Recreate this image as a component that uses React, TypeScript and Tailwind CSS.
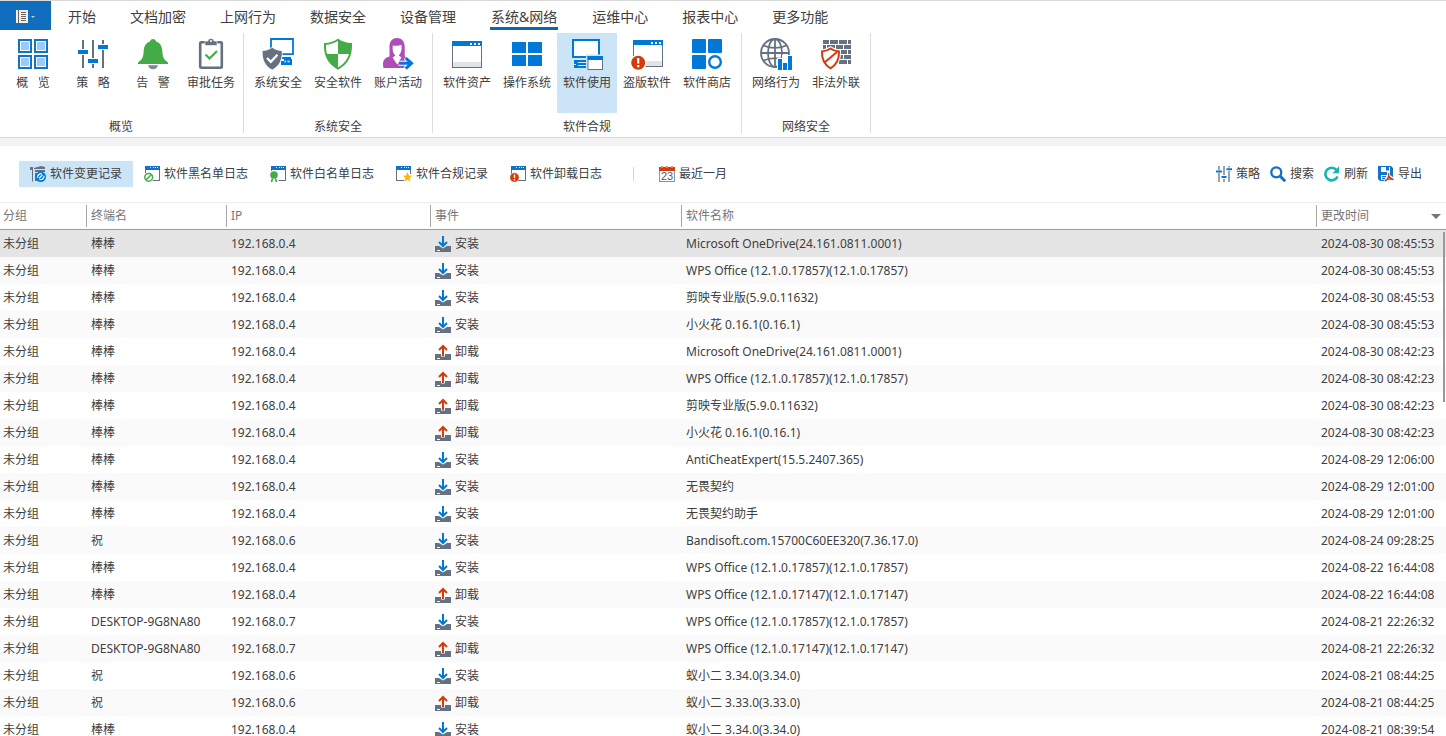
import type { ReactNode } from 'react'

const BLUE = '#0078d7'
const SLATE = '#657080'
const GREEN = '#45ab48'
const RED = '#d43b0c'

function Icon32({ children }: { children: ReactNode }) {
  return (
    <svg className="w-8 h-8 shrink-0" viewBox="0 0 32 32" fill="none" aria-hidden="true">
      {children}
    </svg>
  )
}

function Icon16({ children }: { children: ReactNode }) {
  return (
    <svg className="w-4 h-4 shrink-0" viewBox="0 0 16 16" fill="none" aria-hidden="true">
      {children}
    </svg>
  )
}

function OverviewIcon() {
  return (
    <Icon32>
      {[[1, 1], [17, 1], [1, 17], [17, 17]].map(([x, y]) => (
        <g key={`${x}-${y}`}>
          <rect x={x + 1} y={y + 1} width="12" height="12" fill="#fff" stroke="#1173c4" strokeWidth="2" />
          <rect x={x + 3} y={y + 3} width="8" height="8" fill="#99c9ff" />
        </g>
      ))}
    </Icon32>
  )
}

function SlidersIcon() {
  return (
    <Icon32>
      <path d="M6 2v9M6 17v13M16 2v18M16 26v4M26 2v4M26 12v18" stroke={SLATE} strokeWidth="2" />
      <path d="M1 14h10M11 23h10M21 9h10" stroke={BLUE} strokeWidth="4" />
    </Icon32>
  )
}

function BellIcon() {
  return (
    <Icon32>
      <path d="M16 1c1.600 0 2.800 1 3 2.600 4 1.200 6 4.600 6.300 9.400.3 5.500 1.200 8.500 5.700 11.500V26H1v-1.500c4.500-3 5.400-6 5.700-11.500C7 8.200 9 4.800 13 3.600 13.200 2 14.400 1 16 1Z" fill={GREEN} />
      <path d="M11 27.200h10c-.6 2.400-2.500 4-5 4s-4.400-1.600-5-4Z" fill="#7d8896" />
    </Icon32>
  )
}

function ClipboardIcon() {
  return (
    <Icon32>
      <rect x="5.200" y="4.200" width="21.600" height="25.600" rx="1" fill="#fff" stroke={SLATE} strokeWidth="2.600" />
      <path d="M10 3h3a3 2.600 0 0 1 6 0h3v4.500H10Z" fill={SLATE} stroke="#fff" strokeWidth=".6" />
      <circle cx="16" cy="3" r="1" fill="#fff" />
      <path d="m10.500 16.500 4 4 7.500-7.500" stroke={GREEN} strokeWidth="2.200" />
    </Icon32>
  )
}

function SystemSafeIcon() {
  return (
    <Icon32>
      <path d="M9 13V1h22v15.200H19" stroke={BLUE} strokeWidth="1.800" />
      <path d="M20 19h9v2h1v6H19v-4h3v-2h-2Z" fill={BLUE} />
      <path d="M22.500 23.500h1.500M25.500 23.500h2" stroke="#fff" strokeWidth="1.600" />
      <path d="M10.200 9.300c3 2.200 6.300 3.200 10 3.400.5 9-2.700 15.600-10 19.300C3 28.300-.3 21.700.2 12.700c3.700-.2 7-1.200 10-3.400Z" fill={SLATE} stroke="#fff" strokeWidth=".8" />
      <path d="m5 20 3.800 3.800 6.700-7" stroke="#fff" strokeWidth="2.300" />
    </Icon32>
  )
}

function SafeSoftwareIcon() {
  return (
    <Icon32>
      <path d="M16 1.700c4 2.800 8.300 4 13 4.200.5 11.100-3.600 19.600-13 24.600C6.600 25.500 2.500 17 3 5.900c4.700-.2 9-1.400 13-4.200Z" fill="#fff" stroke={GREEN} strokeWidth="2" />
      <path d="M16 1.700c4 2.800 8.300 4 13 4.200.1 3.700-.2 7-1.100 10.100H16Z" fill={GREEN} />
      <path d="M16 16v14.500C9.700 27.200 5.800 22.200 4.100 16Z" fill={GREEN} />
    </Icon32>
  )
}

function AccountIcon() {
  return (
    <Icon32>
      <path d="M7.500 18.500V8.500C7.500 3.300 10.500 0 15 0s7.700 3.300 7.700 8.500v10c4.300 1 7 3 7.300 6V30H1.500C.2 24 1.500 20 7.500 18.500Z" fill="#ac4db8" />
      <path d="M10.800 7.500c3 .6 6.500.2 8.700-.7.6 4.700-.3 8.700-2.700 10.700l2.700 2-4.400 7-4.500-7 2.800-2c-2.400-2-3.300-5.500-2.600-10Z" fill="#fff" />
      <path d="M23 24.500h9V32h-9Z" fill="#fff" />
      <path d="M16.500 25.300h12M23.500 19.500l6 5.800-6 5.800" stroke="#fff" strokeWidth="5" />
      <path d="M17 25.300h12M23.700 20l5.800 5.300-5.800 5.300" stroke={BLUE} strokeWidth="3" />
    </Icon32>
  )
}

function AssetIcon() {
  return (
    <Icon32>
      <rect x="1.500" y="3.500" width="29" height="26" fill="#fff" stroke={SLATE} />
      <path d="M2 24h28v5H2Z" fill="#e1e3e6" />
      <path d="M1 3h30v5H1Z" fill={BLUE} />
      <path d="M19 5h2v2h-2ZM23 5h2v2h-2ZM27 5h2v2h-2Z" fill="#fff" />
    </Icon32>
  )
}

function WindowsIcon() {
  return (
    <Icon32>
      <path d="M1 4h14v11H1ZM17 4h14v11H17ZM1 17h14v11H1ZM17 17h14v11H17Z" fill={BLUE} />
    </Icon32>
  )
}

function UsageIcon() {
  return (
    <Icon32>
      <rect x="2" y="2" width="26" height="17" fill="#fff" stroke={BLUE} strokeWidth="2" />
      <path d="M3 22h13v2H7v1h9v5H3v-3h2v-1H3Z" fill={BLUE} />
      <path d="M7 27.500h9" stroke="#fff" />
      <path d="M15 16.500h17V32H15Z" fill="#cbe4f6" />
      <rect x="17" y="18.500" width="14.500" height="13" fill="#fff" stroke={SLATE} />
      <path d="M16.500 18H32v4H16.500Z" fill={BLUE} />
    </Icon32>
  )
}

function PiracyIcon() {
  return (
    <Icon32>
      <rect x="2.500" y="2.500" width="29" height="26" fill="#fff" stroke={SLATE} />
      <path d="M3 23h28v5H3Z" fill="#e1e3e6" />
      <path d="M2 2h30v5H2Z" fill={BLUE} />
      <path d="M20 4h2v2h-2ZM24 4h2v2h-2ZM28 4h2v2h-2Z" fill="#fff" />
      <circle cx="7.200" cy="24.700" r="7.600" fill={RED} stroke="#fff" strokeWidth="1.200" />
      <path d="M7.200 20v5.500M7.200 27v2.300" stroke="#fff" strokeWidth="2.200" />
    </Icon32>
  )
}

function StoreIcon() {
  return (
    <Icon32>
      <rect x="1" y="1" width="14" height="14" rx="1" fill={BLUE} />
      <rect x="17" y="1" width="14" height="14" rx="1" fill={BLUE} />
      <rect x="1" y="17" width="14" height="14" rx="1" fill={BLUE} />
      <circle cx="24" cy="24" r="5.800" stroke={BLUE} strokeWidth="2.400" />
    </Icon32>
  )
}

function GlobeIcon() {
  return (
    <Icon32>
      <g stroke={SLATE} strokeWidth="1.800">
        <circle cx="15" cy="15" r="14" />
        <ellipse cx="15" cy="15" rx="7" ry="14" />
        <path d="M15 1v28M1 15h28M3.500 7.500c7 3 16 3 23 0M3.500 22.500c7-3 16-3 23 0" />
      </g>
      <path d="M17 20h5v-3h10v15H17Z" fill="#fff" />
      <path d="M18 21h4v11h-4ZM23 25h4v7h-4ZM28 18h4v14h-4Z" fill={BLUE} />
    </Icon32>
  )
}

function FirewallIcon() {
  return (
    <Icon32>
      <path
        d="M3 2h6v4H3ZM10 2h8v4h-8ZM19 2h8v4h-8ZM28 2h3v4h-3ZM3 7h3v4H3ZM7 7h8v4H7ZM16 7h7v4h-7ZM24 7h7v4h-7ZM3 12h7v4H3ZM11 12h7v4h-7ZM19 12h8v4h-8ZM28 12h3v4h-3ZM16 17h7v4h-7ZM24 17h7v4h-7ZM19 22h8v4h-8ZM28 22h3v4h-3Z"
        fill={SLATE}
      />
      <path d="M10.500 10.500c2.700 1.900 5.400 2.800 8.500 3 .3 7.500-2.300 13.200-8.500 16.800C4.300 26.700 1.700 21 2 13.500c3.100-.2 5.800-1.100 8.500-3Z" fill="#fff" stroke="#fff" strokeWidth="4" />
      <path d="M10.500 10.500c2.700 1.900 5.400 2.800 8.500 3 .3 7.500-2.300 13.200-8.500 16.800C4.300 26.700 1.700 21 2 13.500c3.100-.2 5.800-1.100 8.500-3ZM4.500 24.500 17 14" stroke={RED} strokeWidth="2" />
    </Icon32>
  )
}

function MiniWindow({ children }: { children: ReactNode }) {
  return (
    <Icon16>
      <rect x="1.500" y="1.500" width="14" height="13" fill="#fff" stroke={SLATE} />
      <path d="M1 0h15v4H1Z" fill="#1173c4" />
      <path d="M6 1h1v1H6ZM9 1h1v1H9ZM11 1h1v1h-1ZM13 1h1v1h-1Z" fill="#fff" />
      {children}
    </Icon16>
  )
}

function ChangeIcon() {
  return (
    <Icon16>
      <path d="M0 1h3v14.500H2V4H0Z" fill={SLATE} />
      <path d="m4 2 7-2 4 1v2H4ZM5 4h10v2H5ZM5 7h3v8H5Z" fill={SLATE} />
      <circle cx="10.700" cy="10.700" r="5.300" fill={BLUE} />
      <path d="M7.500 11.700c0-2.500 1.500-4 4.500-4M14 9.700c0 2.500-1.500 4-4.500 4" stroke="#fff" strokeWidth="1.200" />
      <path d="m9 12.300 3.500-3.500" stroke="#fff" strokeWidth="1.200" />
    </Icon16>
  )
}

function BlacklistIcon() {
  return (
    <MiniWindow>
      <circle cx="4.700" cy="11.300" r="5.200" fill="#fff" />
      <circle cx="4.700" cy="11.300" r="3.900" fill="#fff" stroke={GREEN} strokeWidth="1.500" />
      <path d="m2.200 13.800 5-5" stroke={GREEN} strokeWidth="1.500" />
    </MiniWindow>
  )
}

function WhitelistIcon() {
  return (
    <MiniWindow>
      <path d="M0 5h8.500v11H0Z" fill="#fff" />
      <circle cx="4" cy="9" r="3.800" fill={GREEN} />
      <path d="m2.500 12.500-1 3.500M5.500 12.500l1 3.500" stroke={GREEN} strokeWidth="1.700" />
    </MiniWindow>
  )
}

function ComplianceIcon() {
  return (
    <Icon16>
      <rect x=".5" y="1.500" width="14" height="13" fill="#fff" stroke={SLATE} />
      <path d="M0 0h15v4H0Z" fill="#1173c4" />
      <path d="M5 1h1v1H5ZM8 1h1v1H8ZM10 1h1v1h-1ZM12 1h1v1h-1Z" fill="#fff" />
      <path d="M9 8h7v8H8Z" fill="#fff" />
      <path d="m11.500 6 1.500 3.500 3 .3-2.300 2.200.8 3.700-3-1.900-3 1.900.8-3.700L7 9.800l3-.3Z" fill="#ffb900" />
    </Icon16>
  )
}

function UninstallLogIcon() {
  return (
    <MiniWindow>
      <circle cx="4.500" cy="11.500" r="4.700" fill={RED} stroke="#fff" strokeWidth=".5" />
      <path d="M4.500 8.500v3.500M4.500 13v1.500" stroke="#fff" strokeWidth="1.400" />
    </MiniWindow>
  )
}

function CalendarIcon() {
  return (
    <Icon16>
      <rect x=".5" y="1.500" width="15" height="14" fill="#fff" stroke="#8f959d" />
      <path d="M0 1h2V0h2v1h3V0h2v1h3V0h2v1h2v4H0Z" fill={RED} />
      <path d="M3 0v2M8 0v2M13 0v2" stroke="#fff" strokeWidth=".8" />
      <text x="8" y="14" textAnchor="middle" fontSize="11" fontFamily="Liberation Sans, sans-serif" fill="#4d5a78">23</text>
    </Icon16>
  )
}

function PolicyIcon() {
  return (
    <Icon16>
      <path d="M3 0v4M3 7v9M8 0v9M8 13v3M13 0v1.500M13 5v11" stroke={SLATE} strokeWidth="1.300" />
      <path d="M0 5.500h6M5.500 11h5M10.500 3.300H16" stroke={BLUE} strokeWidth="2" />
    </Icon16>
  )
}

function SearchIcon() {
  return (
    <Icon16>
      <circle cx="6.300" cy="6.300" r="5" stroke="#146fc6" strokeWidth="2.300" />
      <path d="m10 10 5.200 5.200" stroke="#146fc6" strokeWidth="3" />
    </Icon16>
  )
}

function RefreshIcon() {
  return (
    <Icon16>
      <path d="M12.500 4A6.300 6.300 0 1 0 13.500 10.500" stroke="#15b5ad" strokeWidth="2.600" />
      <path d="M15 .3v6.900H8.500Z" fill="#15b5ad" />
    </Icon16>
  )
}

function ExportIcon() {
  return (
    <Icon16>
      <path d="M0 0h13l2 2v13H2l-2-2Z" fill="#1474cc" />
      <path d="M3 1h9v5H3ZM3 9h9v5H3Z" fill="#fff" />
      <path d="M8 1h3v3.500H8ZM4 10h4v1.300H4ZM4 12h4v1.300H4Z" fill="#1474cc" />
      <path d="M9 6h3v3l4 3v4H6.500v-3L9 11Z" fill="#fff" />
      <path d="M10.500 7c.8 3-.8 6-3.300 8.300M10.300 9c1 2.500 2.800 4 5.300 4.700M7 14.500c2.500-1.700 5-2 8.500-1" stroke={RED} strokeWidth="1.300" />
    </Icon16>
  )
}

function InstallIcon() {
  return (
    <Icon16>
      <path d="M0 10h4l4 2.500 4-2.500h4v6H0Z" fill={SLATE} />
      <path d="M2 14.500h3" stroke="#fff" />
      <path d="M8 0v10M4 6l4 4 4-4" stroke={BLUE} strokeWidth="2" />
    </Icon16>
  )
}

function UninstallIcon() {
  return (
    <Icon16>
      <path d="M0 10h6v2.500h4V10h6v6H0Z" fill={SLATE} />
      <path d="M2 14.500h3" stroke="#fff" />
      <path d="M8 12V2M4 6l4-4 4 4" stroke={RED} strokeWidth="2" />
    </Icon16>
  )
}

const menuTabs = ['开始', '文档加密', '上网行为', '数据安全', '设备管理', '系统&网络', '运维中心', '报表中心', '更多功能']

const ribbonGroups = [
  {
    title: '概览',
    items: [
      { label: '概\u00a0\u00a0\u00a0览', icon: <OverviewIcon /> },
      { label: '策\u00a0\u00a0\u00a0略', icon: <SlidersIcon /> },
      { label: '告\u00a0\u00a0\u00a0警', icon: <BellIcon /> },
      { label: '审批任务', icon: <ClipboardIcon />, narrow: true },
    ],
  },
  {
    title: '系统安全',
    items: [
      { label: '系统安全', icon: <SystemSafeIcon /> },
      { label: '安全软件', icon: <SafeSoftwareIcon /> },
      { label: '账户活动', icon: <AccountIcon /> },
    ],
  },
  {
    title: '软件合规',
    items: [
      { label: '软件资产', icon: <AssetIcon /> },
      { label: '操作系统', icon: <WindowsIcon /> },
      { label: '软件使用', icon: <UsageIcon />, active: true },
      { label: '盗版软件', icon: <PiracyIcon /> },
      { label: '软件商店', icon: <StoreIcon /> },
    ],
  },
  {
    title: '网络安全',
    items: [
      { label: '网络行为', icon: <GlobeIcon /> },
      { label: '非法外联', icon: <FirewallIcon /> },
    ],
  },
]

const views = [
  { label: '软件变更记录', icon: <ChangeIcon />, active: true },
  { label: '软件黑名单日志', icon: <BlacklistIcon /> },
  { label: '软件白名单日志', icon: <WhitelistIcon /> },
  { label: '软件合规记录', icon: <ComplianceIcon /> },
  { label: '软件卸载日志', icon: <UninstallLogIcon /> },
]

const actions = [
  { label: '策略', icon: <PolicyIcon /> },
  { label: '搜索', icon: <SearchIcon /> },
  { label: '刷新', icon: <RefreshIcon /> },
  { label: '导出', icon: <ExportIcon /> },
]

const columns = [
  { label: '分组', width: 'w-[86px]' },
  { label: '终端名', width: 'w-[140px]' },
  { label: 'IP', width: 'w-[204px]' },
  { label: '事件', width: 'w-[251px]' },
  { label: '软件名称', width: '' },
  { label: '更改时间', width: 'w-[130px]' },
]

// [terminal, ip, event, software, time]
const records = [
  ['棒棒', '192.168.0.4', '安装', 'Microsoft OneDrive(24.161.0811.0001)', '2024-08-30 08:45:53'],
  ['棒棒', '192.168.0.4', '安装', 'WPS Office (12.1.0.17857)(12.1.0.17857)', '2024-08-30 08:45:53'],
  ['棒棒', '192.168.0.4', '安装', '剪映专业版(5.9.0.11632)', '2024-08-30 08:45:53'],
  ['棒棒', '192.168.0.4', '安装', '小火花 0.16.1(0.16.1)', '2024-08-30 08:45:53'],
  ['棒棒', '192.168.0.4', '卸载', 'Microsoft OneDrive(24.161.0811.0001)', '2024-08-30 08:42:23'],
  ['棒棒', '192.168.0.4', '卸载', 'WPS Office (12.1.0.17857)(12.1.0.17857)', '2024-08-30 08:42:23'],
  ['棒棒', '192.168.0.4', '卸载', '剪映专业版(5.9.0.11632)', '2024-08-30 08:42:23'],
  ['棒棒', '192.168.0.4', '卸载', '小火花 0.16.1(0.16.1)', '2024-08-30 08:42:23'],
  ['棒棒', '192.168.0.4', '安装', 'AntiCheatExpert(15.5.2407.365)', '2024-08-29 12:06:00'],
  ['棒棒', '192.168.0.4', '安装', '无畏契约', '2024-08-29 12:01:00'],
  ['棒棒', '192.168.0.4', '安装', '无畏契约助手', '2024-08-29 12:01:00'],
  ['祝', '192.168.0.6', '安装', 'Bandisoft.com.15700C60EE320(7.36.17.0)', '2024-08-24 09:28:25'],
  ['棒棒', '192.168.0.4', '安装', 'WPS Office (12.1.0.17857)(12.1.0.17857)', '2024-08-22 16:44:08'],
  ['棒棒', '192.168.0.4', '卸载', 'WPS Office (12.1.0.17147)(12.1.0.17147)', '2024-08-22 16:44:08'],
  ['DESKTOP-9G8NA80', '192.168.0.7', '安装', 'WPS Office (12.1.0.17857)(12.1.0.17857)', '2024-08-21 22:26:32'],
  ['DESKTOP-9G8NA80', '192.168.0.7', '卸载', 'WPS Office (12.1.0.17147)(12.1.0.17147)', '2024-08-21 22:26:32'],
  ['祝', '192.168.0.6', '安装', '蚁小二 3.34.0(3.34.0)', '2024-08-21 08:44:25'],
  ['祝', '192.168.0.6', '卸载', '蚁小二 3.33.0(3.33.0)', '2024-08-21 08:44:25'],
  ['棒棒', '192.168.0.4', '安装', '蚁小二 3.34.0(3.34.0)', '2024-08-21 08:39:54'],
]

function MenuBar() {
  return (
    <nav className="flex h-[30px] border-t border-[#d9d9d9]">
      <button className="w-[51px] bg-[#106ebe] flex items-center justify-center" aria-label="文件">
        <svg className="w-5 h-4" viewBox="0 0 20 16" fill="none" aria-hidden="true">
          <path d="M0 2h12v13H0Z" fill="#f3efe9" />
          <path d="M2.500 2v13" stroke="#6b6560" />
          <path d="M5 4.500h5M5 6.500h5M5 8.500h5M5 10.500h5M5 12.500h5" stroke="#6b6560" />
          <path d="M15 8h4l-2 2Z" fill="#b9d6ee" />
        </svg>
      </button>
      {menuTabs.map((tab) => (
        <button key={tab} className="px-[17px] text-sm leading-5 flex">
          <span
            className={`h-[29px] pt-1.5 border-b-3 ${
              tab === '系统&网络' ? 'px-px border-[#1067b0]' : 'border-transparent'
            }`}
          >
            {tab}
          </span>
        </button>
      ))}
    </nav>
  )
}

function Ribbon() {
  return (
    <div className="flex h-[108px] pt-[3px] pb-1 border-b border-[#d9d9d9]">
      {ribbonGroups.map((group) => (
        <section key={group.title} className="flex flex-col justify-between border-r border-[#dcdcdc] px-1 first:pl-[3px]">
          <div className="flex">
            {group.items.map((item) => (
              <button
                key={item.label}
                className={`h-20 pt-[5px] flex flex-col items-center gap-[5px] ${'narrow' in item ? 'w-14' : 'w-15'} ${
                  'active' in item ? 'bg-[#cbe4f6]' : ''
                }`}
              >
                {item.icon}
                <span className="leading-4 whitespace-nowrap">{item.label}</span>
              </button>
            ))}
          </div>
          <h2 className="text-center leading-3">{group.title}</h2>
        </section>
      ))}
    </div>
  )
}

function Toolbar() {
  return (
    <div className="flex items-center h-14 pl-[19px] pr-6 shrink-0">
      {views.map((view) => (
        <button
          key={view.label}
          className={`flex items-center gap-1 h-[26px] px-[11px] ${view.active ? 'bg-[#cbe4f6]' : ''}`}
        >
          {view.icon}
          {view.label}
        </button>
      ))}
      <span className="w-px h-3.5 ml-5 mr-[25px] bg-[#d6d6d6]" />
      <button className="flex items-center gap-1">
        <CalendarIcon />
        最近一月
      </button>
      <div className="flex gap-2.5 ml-auto">
        {actions.map((action) => (
          <button key={action.label} className="flex items-center gap-1">
            {action.icon}
            {action.label}
          </button>
        ))}
      </div>
    </div>
  )
}

function RecordTable() {
  return (
    <div className="relative flex-1 min-h-0 overflow-hidden border-t border-[#ececec]">
      <table className="w-full table-fixed border-separate border-spacing-0 whitespace-nowrap">
        <thead>
          <tr className="text-[#767676]">
            {columns.map((col, i) => (
              <th
                key={col.label}
                scope="col"
                className={`h-[27px] p-0 text-left font-normal border-b border-[#9b9b9b] ${col.width}`}
              >
                <div
                  className={`flex items-center justify-between h-[22px] ${
                    i === 0 ? 'pl-[3px]' : 'pl-1 border-l border-[#a6a6a6]'
                  }`}
                >
                  {col.label}
                  {i === columns.length - 1 && (
                    <svg className="w-2.5 h-[5px] mr-[5px]" viewBox="0 0 10 5" aria-hidden="true">
                      <path d="M0 0h10L5 5Z" fill="#767676" />
                    </svg>
                  )}
                </div>
              </th>
            ))}
          </tr>
        </thead>
        <tbody>
          {records.map(([terminal, ip, event, software, time], i) => (
            <tr key={i} className={`h-[27px] ${i === 0 ? 'bg-[#e5e5e5]' : 'odd:bg-white even:bg-[#fafafa]'}`}>
              <td className="p-0 pl-[3px]">未分组</td>
              <td className="p-0 pl-[5px]">{terminal}</td>
              <td className="p-0 pl-[5px]">{ip}</td>
              <td className="p-0 pl-[5px]">
                <span className="flex items-center gap-1">
                  {event === '安装' ? <InstallIcon /> : <UninstallIcon />}
                  {event}
                </span>
              </td>
              <td className="p-0 pl-[5px]">{software}</td>
              <td className="p-0 pl-[5px]">{time}</td>
            </tr>
          ))}
        </tbody>
      </table>
      <div className="absolute right-px top-[29px] w-0.5 h-[170px] bg-[#999999]" />
    </div>
  )
}

export default function App() {
  return (
    <div className="h-screen flex flex-col overflow-hidden bg-white text-[#404040] text-xs font-['Noto_Sans','Noto_Sans_CJK_SC',sans-serif]">
      <header className="border-b-8 border-[#f2f2f2] shrink-0">
        <MenuBar />
        <Ribbon />
      </header>
      <main className="flex-1 min-h-0 flex flex-col">
        <Toolbar />
        <RecordTable />
      </main>
    </div>
  )
}
